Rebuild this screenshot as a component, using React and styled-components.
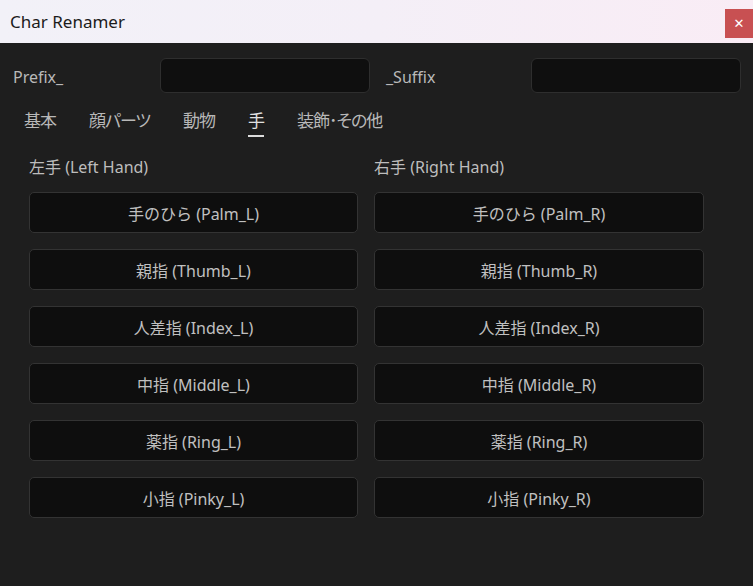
import styled, { createGlobalStyle } from 'styled-components';

const GlobalStyle = createGlobalStyle`
  html, body { margin: 0; padding: 0; background: #1e1e1e; }
  body {
    font-family: "Noto Sans", "Noto Sans CJK JP", sans-serif;
    overflow: hidden;
  }
`;

const Window = styled.div`
  width: 753px;
  height: 586px;
  display: flex;
  flex-direction: column;
  background: #1e1e1e;
`;

const TitleBar = styled.div`
  height: 43px;
  flex: none;
  display: flex;
  align-items: flex-start;
  justify-content: space-between;
  background: linear-gradient(90deg, #f2f1f8 0%, #f4eff7 50%, #f9ecf5 100%);
`;

const Title = styled.div`
  padding-left: 10px;
  line-height: 43px;
  font-size: 17px;
  color: #1b1b1b;
`;

const CloseButton = styled.button`
  margin-top: 9px;
  width: 28px;
  height: 29px;
  border: none;
  padding: 0;
  background: #c85052;
  color: #fff;
  font-family: "DejaVu Sans", sans-serif;
  font-weight: bold;
  font-size: 13px;
  line-height: 29px;
`;

const Body = styled.div`
  padding: 15px 0 0 13px;
  display: flex;
  flex-direction: column;
`;

const AffixRow = styled.div`
  display: flex;
  align-items: center;
`;

const AffixLabel = styled.label`
  flex: none;
  box-sizing: border-box;
  width: ${p => p.$w}px;
  font-size: 16px;
  color: #b9b9b9;
  padding-left: ${p => p.$pad || 0}px;
  padding-top: 2px;
`;

const AffixInput = styled.input`
  flex: none;
  box-sizing: border-box;
  width: 210px;
  height: 35px;
  background: #0f0f0f;
  border: 1px solid #2e2e2e;
  border-radius: 6px;
  outline: none;
  color: #ddd;
`;

const Tabs = styled.div`
  display: flex;
  gap: 33px;
  padding-left: 11px;
  margin-top: 14px;
`;

const Tab = styled.div`
  position: relative;
  font-size: 17px;
  line-height: 27px;
  letter-spacing: -1px;
  font-feature-settings: "palt";
  color: ${p => (p.$active ? '#e0e0e0' : '#b8b8b8')};
  &::after {
    content: '';
    display: ${p => (p.$active ? 'block' : 'none')};
    position: absolute;
    left: 0;
    right: 0;
    bottom: -3px;
    height: 2px;
    background: #dcdcdc;
  }
`;

const Columns = styled.div`
  display: grid;
  grid-template-columns: 329px 330px;
  column-gap: 16px;
  padding-left: 16px;
  margin-top: 22px;
`;

const Column = styled.div`
  display: flex;
  flex-direction: column;
  gap: 16px;
`;

const Heading = styled.div`
  font-size: 16px;
  line-height: 22px;
  color: #bdbdbd;
  margin-bottom: -2px;
`;

const PartButton = styled.button`
  box-sizing: border-box;
  height: 41px;
  width: 100%;
  background: #0e0e0e;
  border: 1px solid #333;
  border-radius: 5px;
  color: #c0c0c0;
  font-family: inherit;
  font-size: 16px;
`;

const parts = [
  ['手のひら', 'Palm'],
  ['親指', 'Thumb'],
  ['人差指', 'Index'],
  ['中指', 'Middle'],
  ['薬指', 'Ring'],
  ['小指', 'Pinky'],
];

const tabs = ['基本', '顔パーツ', '動物', '手', '装飾･その他'];

const HandColumn = ({ title, side }) => (
  <Column>
    <Heading>{title}</Heading>
    {parts.map(([jp, en]) => (
      <PartButton key={en}>{jp} ({en}_{side})</PartButton>
    ))}
  </Column>
);

export default function App() {
  return (
    <Window>
      <GlobalStyle />
      <TitleBar>
        <Title>Char Renamer</Title>
        <CloseButton>✕</CloseButton>
      </TitleBar>
      <Body>
        <AffixRow>
          <AffixLabel $w={147}>Prefix_</AffixLabel>
          <AffixInput />
          <AffixLabel $w={161} $pad={16}>_Suffix</AffixLabel>
          <AffixInput />
        </AffixRow>
        <Tabs>
          {tabs.map(t => (
            <Tab key={t} $active={t === '手'}>{t}</Tab>
          ))}
        </Tabs>
        <Columns>
          <HandColumn title="左手 (Left Hand)" side="L" />
          <HandColumn title="右手 (Right Hand)" side="R" />
        </Columns>
      </Body>
    </Window>
  );
}
